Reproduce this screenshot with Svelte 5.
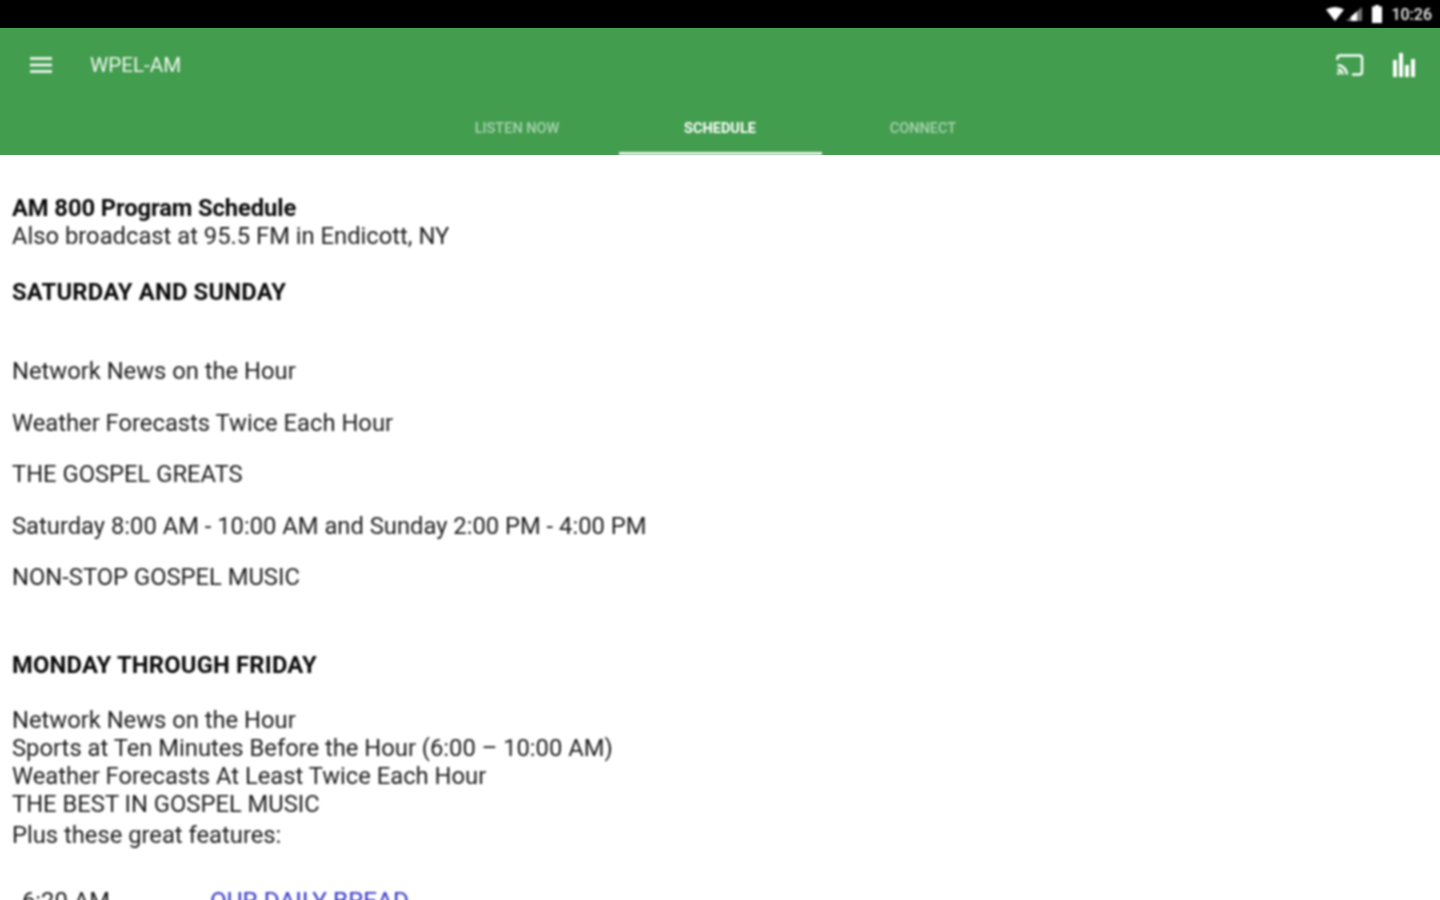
<script>
    const tabs = [
        { label: "LISTEN NOW", active: false },
        { label: "SCHEDULE", active: true },
        { label: "CONNECT", active: false }
    ];

    const weekend = [
        "Network News on the Hour",
        "Weather Forecasts Twice Each Hour",
        "THE GOSPEL GREATS",
        "Saturday 8:00 AM - 10:00 AM and Sunday 2:00 PM - 4:00 PM",
        "NON-STOP GOSPEL MUSIC"
    ];

    const weekday = [
        "Network News on the Hour",
        "Sports at Ten Minutes Before the Hour (6:00 – 10:00 AM)",
        "Weather Forecasts At Least Twice Each Hour",
        "THE BEST IN GOSPEL MUSIC"
    ];
</script>

<div class="screen">
    <div class="status-bar">
        <svg class="wifi" viewBox="0 0 18 14" width="18" height="14"><path d="M0 2.5 Q9 -2.5 18 2.5 L9 14 Z" fill="#fff" /></svg>
        <svg class="signal" viewBox="0 0 16 14" width="16" height="14"><path d="M0 14 L16 0 V14 Z" fill="#fff" opacity="0.45" /><path d="M5 9.6 L11 4.4 V14 H5 Z" fill="#fff" /></svg>
        <svg class="battery" viewBox="0 0 12 18" width="12" height="18"><path d="M4 0 H8 V1.5 H11 V18 H1 V1.5 H4 Z" fill="#fff" /></svg>
        <span class="clock">10:26</span>
    </div>

    <header class="app-bar">
        <div class="toolbar">
            <svg class="menu" viewBox="0 0 22 16" width="22" height="16"><path d="M0 1.5 H22 M0 8 H22 M0 14.5 H22" stroke="#fff" stroke-width="2.6" /></svg>
            <span class="title">WPEL-AM</span>
            <div class="actions">
                <svg viewBox="0 0 28 24" width="28" height="24" fill="none" stroke="#fff" stroke-width="2.4">
                    <path d="M1.5 7 V5 Q1.5 2.5 4 2.5 H23.5 Q26 2.5 26 5 V19 Q26 21.5 23.5 21.5 H16" />
                    <path d="M1.5 12 A10 10 0 0 1 11 21.5 M1.5 16.5 A5.5 5.5 0 0 1 6.5 21.5" />
                    <circle cx="2.5" cy="20.5" r="1.4" fill="#fff" stroke="none" />
                </svg>
                <svg viewBox="0 0 24 24" width="24" height="24" fill="#fff">
                    <rect x="1" y="7" width="4" height="17" />
                    <rect x="7" y="0" width="4" height="24" />
                    <rect x="13" y="12" width="4" height="12" />
                    <rect x="19" y="6" width="4" height="18" />
                </svg>
            </div>
        </div>
        <nav class="tabs">
            {#each tabs as tab}
                <div class="tab" class:active={tab.active}>{tab.label}</div>
            {/each}
        </nav>
    </header>

    <main class="content">
        <p class="intro"><strong>AM 800 Program Schedule</strong><br />Also broadcast at 95.5 FM in Endicott, NY</p>
        <h2 class="first">SATURDAY AND SUNDAY</h2>
        <div class="spaced">
            {#each weekend as line}
                <p>{line}</p>
            {/each}
        </div>
        <h2 class="second">MONDAY THROUGH FRIDAY</h2>
        <div class="lines">
            {#each weekday as line}
                <div>{line}</div>
            {/each}
        </div>
        <p class="plus">Plus these great features:</p>
        <div class="feature">
            <span class="time">6:20 AM</span>
            <span class="link">OUR DAILY BREAD</span>
        </div>
    </main>
</div>

<style>
    :global(body) {
        margin: 0;
        background: #fff;
    }

    .screen {
        height: 900px;
        overflow: hidden;
        font-family: Roboto, "Liberation Sans", sans-serif;
    }

    /* reference is an upscaled capture, so only the contents get softened, not the bars */
    .status-bar > *,
    .toolbar > *,
    .tabs,
    .content {
        filter: blur(0.8px);
    }

    .status-bar {
        height: 28px;
        background: #000;
        display: flex;
        align-items: center;
        justify-content: flex-end;
        padding-right: 8px;
        color: #eee;
    }

    .wifi {
        margin-right: 2px;
    }

    .signal {
        margin-right: 9px;
    }

    .battery {
        margin-right: 8px;
    }

    .clock {
        font-size: 16px;
        font-weight: 500;
    }

    .app-bar {
        height: 127px;
        background: #439d4f;
        color: #fff;
        display: flex;
        flex-direction: column;
        box-sizing: border-box;
    }

    .toolbar {
        height: 74px;
        display: flex;
        align-items: center;
        padding: 0 24px 0 30px;
    }

    .menu {
        margin-right: 38px;
    }

    .title {
        font-size: 20.6px;
        color: #f0f7f0;
    }

    .actions {
        margin-left: auto;
        display: flex;
        align-items: center;
        gap: 28px;
    }

    .tabs {
        flex: 1;
        display: flex;
        justify-content: center;
    }

    .tab {
        width: 203px;
        box-sizing: border-box;
        padding-top: 18px;
        text-align: center;
        font-size: 14.5px;
        font-weight: 500;
        color: rgba(255, 255, 255, 0.55);
    }

    .tab.active {
        color: #fff;
        font-weight: 700;
        border-bottom: 3px solid #f4f4f4;
    }

    .content {
        padding: 39px 12px 0 12px;
        font-size: 23.75px;
        line-height: 28px;
        color: #1c1c1c;
    }

    p {
        margin: 0;
    }

    strong,
    h2 {
        font-weight: 700;
        color: #0a0a0a;
    }

    strong {
        letter-spacing: -0.1px;
    }

    h2 {
        margin: 0;
        font-size: 23.75px;
        line-height: 28px;
        letter-spacing: 0.2px;
    }

    .first {
        margin-top: 28px;
    }

    .spaced {
        margin-top: 51px;
        display: flex;
        flex-direction: column;
        gap: 23.5px;
    }

    .second {
        margin-top: 60px;
    }

    .lines {
        margin-top: 27px;
    }

    .plus {
        margin-top: 3px;
    }

    .feature {
        margin-top: 38px;
        display: flex;
    }

    .time {
        width: 198px;
        padding-left: 10px;
        box-sizing: border-box;
    }

    .link {
        color: #3333cc;
        font-size: 24.4px;
    }
</style>
